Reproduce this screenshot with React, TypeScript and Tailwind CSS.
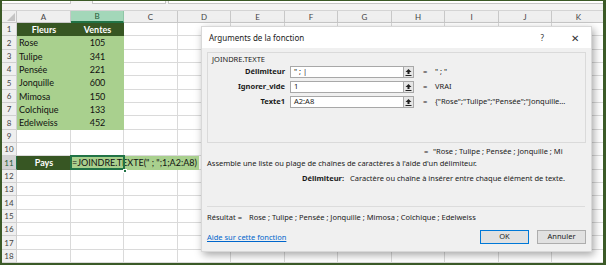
import React from "react";

const cols = ["A", "B", "C", "D", "E", "F", "G", "H", "I", "J", "K"];
const rowH = [13, 14, 13, 13, 14, 13, 13, 14, 13, 13, 14, 13, 13, 14, 13, 13, 14, 13];

const data: Record<number, [string, string]> = {
  2: ["Rose", "105"],
  3: ["Tulipe", "341"],
  4: ["Pensée", "221"],
  5: ["Jonquille", "600"],
  6: ["Mimosa", "150"],
  7: ["Colchique", "133"],
  8: ["Edelweiss", "452"],
};

function colW(i: number) {
  return i % 2 === 0 ? "w-[54px]" : "w-[53px]";
}

function CollapseIcon() {
  return (
    <svg width="7" height="7" viewBox="0 0 7 7">
      <path d="M3.5 0 L0.5 3 L2.5 3 L2.5 5 L4.5 5 L4.5 3 L6.5 3 Z" fill="#222" />
      <rect x="0.5" y="6" width="6" height="1" fill="#222" />
    </svg>
  );
}

function Sheet() {
  return (
    <div className="flex flex-col" style={{ fontFamily: "Lato, 'Open Sans', sans-serif" }}>
      {/* formula bar strip */}
      <div className="h-[10px] bg-[#f3f3f3] flex items-start border-b border-[#d4d4d4]">
        <div className="w-[69px] h-[3px] bg-white border-b border-r border-[#c6c6c6]" />
        <div className="w-[21px]" />
        <div className="w-[74px] h-[3px] bg-white border-b border-x border-[#c6c6c6]" />
        <div className="w-[2px]" />
        <div className="flex-1 h-[3px] bg-white border-b border-l border-[#c6c6c6]" />
      </div>
      {/* column header */}
      <div className="flex h-[12px] bg-[#efefef] text-[8px] text-[#444]">
        <div className="w-[15px] shrink-0 border-r border-b border-[#c8c8c8] relative">
          <svg className="absolute right-[1px] bottom-[1px]" width="8" height="8" viewBox="0 0 8 8">
            <path d="M8 0 L8 8 L0 8 Z" fill="#c4c4c4" />
          </svg>
        </div>
        {cols.map((c, i) => (
          <div
            key={c}
            className={`${colW(i)} shrink-0 flex items-center justify-center border-r ${
              c === "B"
                ? "bg-[#a3d7b9] text-[#1d5c37] border-b-2 border-b-[#217346] border-r-[#8fc6a6]"
                : "border-b border-[#c8c8c8]"
            }`}
          >
            {c}
          </div>
        ))}
      </div>
      {rowH.map((h, r) => {
        const row = r + 1;
        return (
          <div key={row} className={`flex ${h === 13 ? "h-[13px]" : "h-[14px]"} text-[9px]`}>
            <div
              className={`w-[15px] shrink-0 flex items-center justify-center border-r border-b text-[8px] ${
                row === 11
                  ? "bg-[#d2d2d2] text-[#1d5c37] border-[#bcbcbc] border-r-[#217346]"
                  : "bg-[#efefef] text-[#444] border-[#d0d0d0]"
              }`}
            >
              {row}
            </div>
            {cols.map((c, i) => {
              let cls = "bg-white border-r border-b border-[#dadada]";
              let content: React.ReactNode = null;
              if (row === 1 && (c === "A" || c === "B")) {
                cls = "bg-[#375623] text-white font-bold justify-center";
                content = c === "A" ? "Fleurs" : "Ventes";
              } else if (data[row] && (c === "A" || c === "B")) {
                cls = `bg-[#a9d08e] text-[#111] ${c === "A" ? "justify-start pl-[2px]" : "justify-center"}`;
                content = c === "A" ? data[row][0] : data[row][1];
              } else if (row === 11 && c === "A") {
                cls = "bg-[#375623] text-white font-bold justify-center";
                content = "Pays";
              } else if (row === 11 && c === "B") {
                cls = "bg-[#a9d08e] relative z-10";
                content = (
                  <>
                    <div className="absolute left-0 top-0 h-full bg-[#a9d08e] flex items-center pl-[1px] pr-[2px] text-[#111] whitespace-nowrap text-[9px]">
                      =JOINDRE.TEXTE(" ; ";1;A2:A8)
                    </div>
                    <div className="absolute -left-[1px] -top-[1px] w-[55px] h-[15px] border-2 border-[#217346]" />
                    <div className="absolute right-[-3px] bottom-[-3px] w-[4px] h-[4px] bg-[#217346] border border-white" />
                  </>
                );
              }
              return (
                <div key={c} className={`${colW(i)} shrink-0 flex items-center ${cls}`}>
                  {content}
                </div>
              );
            })}
          </div>
        );
      })}
    </div>
  );
}

function Dialog() {
  const rows: [string, string, string][] = [
    ["Délimiteur", '" ; |', '" ; "'],
    ["Ignorer_vide", "1", "VRAI"],
    ["Texte1", "A2:A8", '{"Rose";"Tulipe";"Pensée";"Jonquille...'],
  ];
  return (
    <div
      className="absolute left-[199px] top-[25px] w-[391px] h-[226px] flex flex-col bg-[#f0f0f0] shadow-[2px_3px_8px_rgba(0,0,0,0.35)] border border-[#d8d8d8] text-[#1a1a1a]"
      style={{ fontFamily: "'Noto Sans', 'Open Sans', sans-serif" }}
    >
      <div className="h-[21px] shrink-0 bg-white flex items-center pl-[7px] text-[8px]">
        <span>Arguments de la fonction</span>
        <span className="ml-auto mr-[27px] text-[8px] text-[#333]">?</span>
        <span className="mr-[12px] text-[10px] text-[#333] leading-none">✕</span>
      </div>
      <div className="flex-1 flex flex-col px-[5px] pt-[4px] text-[7.5px]">
        <div className="h-[91px] shrink-0 border border-[#dadada] flex flex-col">
          <div className="pl-[4px] pt-[1px] h-[13px] leading-[11px]">JOINDRE.TEXTE</div>
          <div className="flex flex-col gap-[3px]">
            {rows.map(([lab, val, res]) => (
              <div key={lab} className="flex items-center h-[12px]">
                <div className="w-[77px] text-right font-bold">{lab}</div>
                <div className="ml-[5px] w-[114px] h-[12px] bg-white border border-[#a8a8a8] flex items-center pl-[3px]">
                  {val}
                </div>
                <div className="w-[10px] h-[12px] bg-[#e6e6e6] border border-l-0 border-[#a8a8a8] flex items-center justify-center">
                  <CollapseIcon />
                </div>
                <div className="ml-[9px] w-[12px]">=</div>
                <div className="whitespace-nowrap">{res}</div>
              </div>
            ))}
          </div>
        </div>
        <div className="h-[13px] mt-[2px] flex items-center pl-[217px] whitespace-nowrap overflow-hidden w-[362px]">
          <span className="inline-block w-[9px]">=</span>
          <span>"Rose ; Tulipe ; Pensée ; Jonquille ; Mi</span>
        </div>
        <div className="h-[12px] flex items-center whitespace-nowrap">
          Assemble une liste ou plage de chaînes de caractères à l'aide d'un délimiteur.
        </div>
        <div className="h-[17px] flex items-center pl-[95px] whitespace-nowrap">
          <span className="font-bold mr-[6px]">Délimiteur:</span>
          <span>Caractère ou chaîne à insérer entre chaque élément de texte.</span>
        </div>
        <div className="h-[19px]" />
        <div className="h-px bg-[#dcdcdc] mr-[1px]" />
        <div className="h-[22px] flex items-center whitespace-nowrap">
          <span className="inline-block w-[42px]">Résultat =</span>
          <span>Rose ; Tulipe ; Pensée ; Jonquille ; Mimosa ; Colchique ; Edelweiss</span>
        </div>
        <div className="flex items-start">
          <span className="text-[#0066cc] underline mt-[3px]">Aide sur cette fonction</span>
          <div className="ml-auto flex gap-[8px] mr-[0px] mt-[1px]">
            <div className="w-[49px] h-[14px] bg-[#e1e1e1] border border-[#0078d7] flex items-center justify-center">
              OK
            </div>
            <div className="w-[49px] h-[14px] bg-[#e1e1e1] border border-[#adadad] flex items-center justify-center">
              Annuler
            </div>
          </div>
        </div>
      </div>
    </div>
  );
}

export default function App() {
  return (
    <div className="w-[606px] h-[265px] overflow-hidden relative bg-white border-t border-l-2 border-r-[3px] border-b-2 border-[#3b5a27]">
      <Sheet />
      <Dialog />
    </div>
  );
}
